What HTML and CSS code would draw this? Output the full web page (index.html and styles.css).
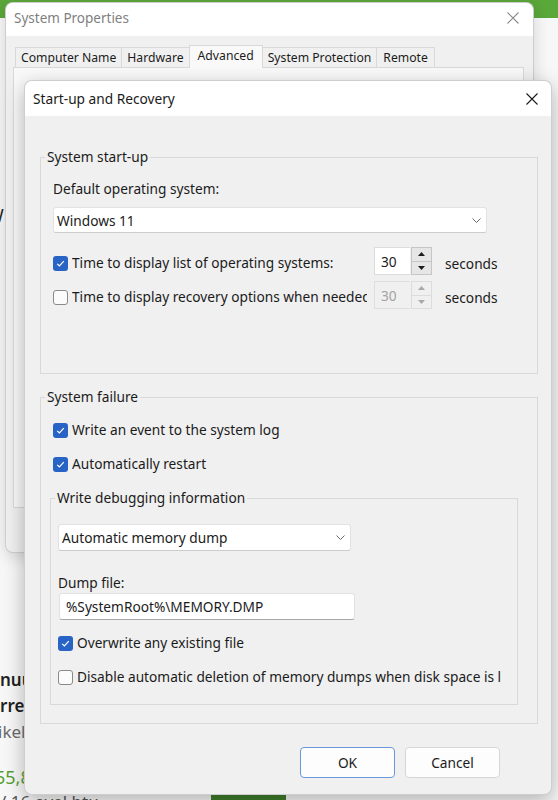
FILE: index.html
```html
<!DOCTYPE html>
<html lang="en">
<head>
<meta charset="utf-8">
<title>Start-up and Recovery</title>
<link rel="stylesheet" href="styles.css">
</head>
<body>
<div class="page">
  <div class="page-header"></div>
  <div class="page-w">W</div>
  <div class="page-bottom">
    <div class="frag frag-bold">nuu</div>
    <div class="frag frag-bold">rrel</div>
    <div class="frag frag-gray">ikel</div>
    <div class="frag frag-green">55,8</div>
    <div class="frag-row"><span class="frag-small">/ 16 ovel btu</span><span class="frag-badge">88</span></div>
  </div>
</div>

<div class="window sysprops">
  <div class="titlebar">
    <span class="title">System Properties</span>
    <svg class="close" width="12" height="12" viewBox="0 0 12 12"><path d="M0.5 0.5 L11.5 11.5 M11.5 0.5 L0.5 11.5" stroke="#8c8c8c" stroke-width="1.1" fill="none"/></svg>
  </div>
  <div class="sp-body">
    <div class="tabs">
      <div class="tab">Computer Name</div>
      <div class="tab">Hardware</div>
      <div class="tab tab-active">Advanced</div>
      <div class="tab">System Protection</div>
      <div class="tab tab-remote">Remote</div>
    </div>
    <div class="tabpanel"></div>
  </div>
</div>

<div class="window dialog">
  <div class="titlebar">
    <span class="title">Start-up and Recovery</span>
    <svg class="close" width="12" height="12" viewBox="0 0 12 12"><path d="M0.5 0.5 L11.5 11.5 M11.5 0.5 L0.5 11.5" stroke="#1b1b1b" stroke-width="1.1" fill="none"/></svg>
  </div>
  <div class="dlg-body">
    <fieldset class="group group-startup">
      <legend>System start-up</legend>
      <div class="label">Default operating system:</div>
      <div class="select select-os">
        <span>Windows 11</span>
        <svg class="chev" width="9" height="5" viewBox="0 0 9 5"><polyline points="0.5,0.5 4.5,4.5 8.5,0.5" stroke="#6a6a6a" stroke-width="1" fill="none"/></svg>
      </div>
      <div class="row row-spin">
        <span class="cb checked"><svg width="15" height="15" viewBox="0 0 15 15"><polyline points="4.2,7.8 6.4,10 10.8,5.2" stroke="#fff" stroke-width="1.2" fill="none"/></svg></span>
        <span class="cb-label spin-label">Time to display list of operating systems:</span>
        <div class="spinner">
          <div class="spin-input">30</div>
          <div class="spin-btns">
            <div class="spin-btn"><svg width="7" height="4" viewBox="0 0 7 4"><polygon points="0,4 3.5,0 7,4" fill="#1b1b1b"/></svg></div>
            <div class="spin-btn"><svg width="7" height="4" viewBox="0 0 7 4"><polygon points="0,0 3.5,4 7,0" fill="#1b1b1b"/></svg></div>
          </div>
        </div>
        <span class="unit">seconds</span>
      </div>
      <div class="row row-spin">
        <span class="cb"></span>
        <span class="cb-label spin-label">Time to display recovery options when needed:</span>
        <div class="spinner disabled">
          <div class="spin-input">30</div>
          <div class="spin-btns">
            <div class="spin-btn"><svg width="7" height="4" viewBox="0 0 7 4"><polygon points="0,4 3.5,0 7,4" fill="#a8a8a8"/></svg></div>
            <div class="spin-btn"><svg width="7" height="4" viewBox="0 0 7 4"><polygon points="0,0 3.5,4 7,0" fill="#a8a8a8"/></svg></div>
          </div>
        </div>
        <span class="unit">seconds</span>
      </div>
    </fieldset>

    <fieldset class="group group-failure">
      <legend>System failure</legend>
      <div class="row row-first">
        <span class="cb checked"><svg width="15" height="15" viewBox="0 0 15 15"><polyline points="4.2,7.8 6.4,10 10.8,5.2" stroke="#fff" stroke-width="1.2" fill="none"/></svg></span>
        <span class="cb-label">Write an event to the system log</span>
      </div>
      <div class="row row-next">
        <span class="cb checked"><svg width="15" height="15" viewBox="0 0 15 15"><polyline points="4.2,7.8 6.4,10 10.8,5.2" stroke="#fff" stroke-width="1.2" fill="none"/></svg></span>
        <span class="cb-label">Automatically restart</span>
      </div>

      <fieldset class="group group-debug">
        <legend>Write debugging information</legend>
        <div class="select select-dump">
          <span>Automatic memory dump</span>
          <svg class="chev" width="9" height="5" viewBox="0 0 9 5"><polyline points="0.5,0.5 4.5,4.5 8.5,0.5" stroke="#6a6a6a" stroke-width="1" fill="none"/></svg>
        </div>
        <div class="label label-dump">Dump file:</div>
        <div class="textbox">%SystemRoot%\MEMORY.DMP</div>
        <div class="row row-overwrite">
          <span class="cb checked"><svg width="15" height="15" viewBox="0 0 15 15"><polyline points="4.2,7.8 6.4,10 10.8,5.2" stroke="#fff" stroke-width="1.2" fill="none"/></svg></span>
          <span class="cb-label">Overwrite any existing file</span>
        </div>
        <div class="row row-next">
          <span class="cb"></span>
          <span class="cb-label clip-label">Disable automatic deletion of memory dumps when disk space is low</span>
        </div>
      </fieldset>
    </fieldset>

    <div class="buttons">
      <div class="btn btn-default">OK</div>
      <div class="btn">Cancel</div>
    </div>
  </div>
</div>
</body>
</html>
```

FILE: styles.css
```css
* { box-sizing: border-box; }
html, body { margin: 0; padding: 0; }
body {
  width: 558px;
  height: 800px;
  overflow: hidden;
  position: relative;
  background: #f7f7f7;
  font-family: "Noto Sans", "Open Sans", sans-serif;
  color: #1b1b1b;
}

/* background web page */
.page { height: 800px; overflow: hidden; }
.page-header { height: 18px; background: #5aa73a; }
.page-w { margin-top: 186px; margin-left: -13px; font-size: 18px; line-height: 22px; color: #222; }
.page-bottom { margin-top: 441px; }
.frag { font-size: 17px; line-height: 26px; white-space: nowrap; }
.frag-bold { font-weight: 600; color: #1f1f1f; }
.frag-gray { color: #6b6b6b; margin-left: -2px; }
.frag-green { color: #54a032; font-size: 18px; margin-top: 19px; margin-left: -5px; }
.frag-row { display: flex; align-items: flex-start; margin-top: 1px; }
.frag-small { font-size: 17px; line-height: 22px; color: #555; width: 211px; white-space: nowrap; }
.frag-badge { width: 75px; height: 22px; background: #3f7e2b; color: #fff; font-size: 14px; text-align: center; margin-top: 4px; }

/* windows */
.window {
  position: absolute;
  background: #f0f0f0;
  border-radius: 8px;
  overflow: hidden;
  border: 1px solid rgba(0, 0, 0, 0.14);
}
.sysprops { left: 5px; top: 2px; width: 529px; height: 551px; box-shadow: 0 4px 16px rgba(0, 0, 0, 0.14); }
.dialog { left: 24px; top: 80px; width: 528px; height: 715px; box-shadow: 0 6px 20px rgba(0, 0, 0, 0.28); }

.titlebar { display: flex; align-items: center; background: #fff; }
.titlebar .close { margin-left: auto; flex: none; }
.sysprops .titlebar { height: 33px; padding: 0 0 3px 8px; }
.sysprops .title { color: #7f7f7f; font-size: 13.5px; }
.sysprops .close { margin-right: 14px; }
.dialog .titlebar { height: 35px; padding-left: 8px; }
.dialog .title { font-size: 13.7px; }
.dialog .close { margin-right: 13px; }

/* system properties body */
.sp-body { padding-top: 9px; }
.tabs { display: flex; align-items: flex-end; margin-left: 9px; height: 22px; position: relative; z-index: 1; }
.tab {
  height: 20px;
  padding: 0 5px;
  border: 1px solid #d9d9d9;
  border-bottom: none;
  margin-right: -1px;
  background: #f0f0f0;
  font-size: 12.2px;
  line-height: 19px;
  white-space: nowrap;
}
.tab-active { height: 23px; margin-bottom: -1px; padding: 0 8px; background: #f9f9f9; line-height: 19px; }
.tab-remote { padding: 0 6px; }
.tabpanel { margin: 0 9px 0 7px; height: 441px; border: 1px solid #d9d9d9; background: #f9f9f9; }

/* dialog body */
.dlg-body { padding: 31px 13px 0 15px; font-size: 13.7px; }
.group {
  margin: 0;
  min-width: 0;
  border: 1px solid #d9d9d9;
  padding: 12px 12px 0 12px;
}
.group legend { padding: 0 2px; margin-left: -8px; line-height: 20px; font-size: 13.7px; }
.group-startup { padding-bottom: 62px; }
.group-failure { margin-top: 13px; padding-bottom: 18px; }
.group-debug { margin: 14px 7px 0 -3px; padding: 16px 7px 17px 7px; }
.group-debug legend { margin-left: -3px; }

.label { line-height: 20px; white-space: nowrap; }
.select {
  display: flex;
  align-items: center;
  background: #fff;
  border: 1px solid #e2e2e2;
  border-bottom-color: #cccccc;
  border-radius: 3px;
  padding-left: 3px;
  white-space: nowrap;
}
.select .chev { margin-left: auto; margin-right: 5px; flex: none; }
.select-os { margin-top: 8px; width: 434px; height: 26px; }
.select-dump { width: 293px; height: 27px; }
.label-dump { margin-top: 22px; }
.textbox {
  margin-left: 1px;
  width: 296px;
  height: 27px;
  background: #fff;
  border: 1px solid #e2e2e2;
  border-bottom-color: #a8a8a8;
  border-radius: 3px;
  padding-left: 6px;
  display: flex;
  align-items: center;
  white-space: nowrap;
}

.row { display: flex; align-items: center; height: 20px; }
.row-first { margin-top: 1px; }
.row-next { margin-top: 14px; }
.row-overwrite { margin-top: 13px; }
.row-spin { height: 28px; margin-top: 16px; }
.row-spin + .row-spin { margin-top: 6px; }

.cb {
  width: 15px;
  height: 15px;
  flex: none;
  border-radius: 3px;
  border: 1px solid #8a8a8a;
  background: #fbfbfb;
}
.cb.checked { border: none; background: #2863c6; }
.cb svg { display: block; }
.cb-label { margin-left: 4px; white-space: nowrap; line-height: 20px; }
.spin-label { width: 295px; overflow: hidden; flex: none; }
.clip-label { width: 424px; overflow: hidden; flex: none; }

.spinner { display: flex; height: 28px; flex: none; margin-left: 7px; margin-bottom: 4px; }
.spin-input {
  width: 36px;
  background: #fff;
  border: 1px solid #dcdcdc;
  border-right: none;
  padding-left: 6px;
  display: flex;
  align-items: center;
}
.spin-btns { width: 21px; margin-left: 1px; display: flex; flex-direction: column; }
.spin-btn {
  flex: 1;
  display: flex;
  align-items: center;
  justify-content: center;
  background: #e6e6e6;
  border: 1px solid #c6c6c6;
}
.spin-btn + .spin-btn { margin-top: -1px; }
.spinner.disabled .spin-input { background: #f0f0f0; color: #a3a3a3; border-color: #dedede; }
.spinner.disabled .spin-btn { background: #f0f0f0; border-color: #dcdcdc; }
.unit { margin-left: 13px; white-space: nowrap; }

.buttons { display: flex; justify-content: flex-end; gap: 10px; margin-top: 23px; margin-right: 38px; }
.btn {
  width: 95px;
  height: 31px;
  display: flex;
  align-items: center;
  justify-content: center;
  background: #fdfdfd;
  border: 1px solid #d6d6d6;
  border-radius: 4px;
}
.btn-default { border-color: #6898d8; }
```
